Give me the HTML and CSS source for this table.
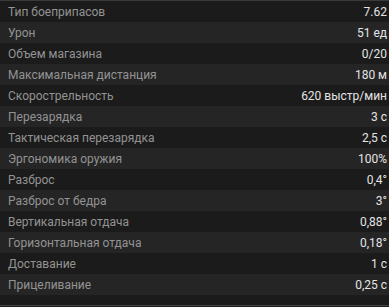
FILE: index.html
```html
<!DOCTYPE html>
<html>
<head>
    <meta charset="utf-8">
    <link rel="stylesheet" href="styles.css">
</head>
<body>
    <div class="stats">
        <div class="stat-row"><span class="stat-name">Тип боеприпасов</span><span class="stat-value">7.62</span></div>
        <div class="stat-row"><span class="stat-name">Урон</span><span class="stat-value">51 ед</span></div>
        <div class="stat-row"><span class="stat-name">Объем магазина</span><span class="stat-value">0/20</span></div>
        <div class="stat-row"><span class="stat-name">Максимальная дистанция</span><span class="stat-value">180 м</span></div>
        <div class="stat-row"><span class="stat-name">Скорострельность</span><span class="stat-value">620 выстр/мин</span></div>
        <div class="stat-row"><span class="stat-name">Перезарядка</span><span class="stat-value">3 с</span></div>
        <div class="stat-row"><span class="stat-name">Тактическая перезарядка</span><span class="stat-value">2,5 с</span></div>
        <div class="stat-row"><span class="stat-name">Эргономика оружия</span><span class="stat-value">100%</span></div>
        <div class="stat-row"><span class="stat-name">Разброс</span><span class="stat-value">0,4°</span></div>
        <div class="stat-row"><span class="stat-name">Разброс от бедра</span><span class="stat-value">3°</span></div>
        <div class="stat-row"><span class="stat-name">Вертикальная отдача</span><span class="stat-value">0,88°</span></div>
        <div class="stat-row"><span class="stat-name">Горизонтальная отдача</span><span class="stat-value">0,18°</span></div>
        <div class="stat-row"><span class="stat-name">Доставание</span><span class="stat-value">1 с</span></div>
        <div class="stat-row"><span class="stat-name">Прицеливание</span><span class="stat-value">0,25 с</span></div>
    </div>
</body>
</html>
```

FILE: styles.css
```css
body {
    margin: 0;
    background-color: #1b1b1b;
    font-family: Roboto, "Liberation Sans", sans-serif;
    font-size: 12px;
}
.stats {
    border-top: 1px solid #3a3a3a;
    border-bottom: 1px solid #444;
    padding-bottom: 10px;
}
.stat-row {
    height: 21px;
    display: flex;
    align-items: center;
    justify-content: space-between;
    padding: 0 2px 0 8px;
    background-color: #1b1b1b;
}
.stat-row:nth-child(even) {
    background-color: #252525;
}
.stat-name {
    color: #939393;
}
.stat-value {
    color: #e4e4e4;
}
```
